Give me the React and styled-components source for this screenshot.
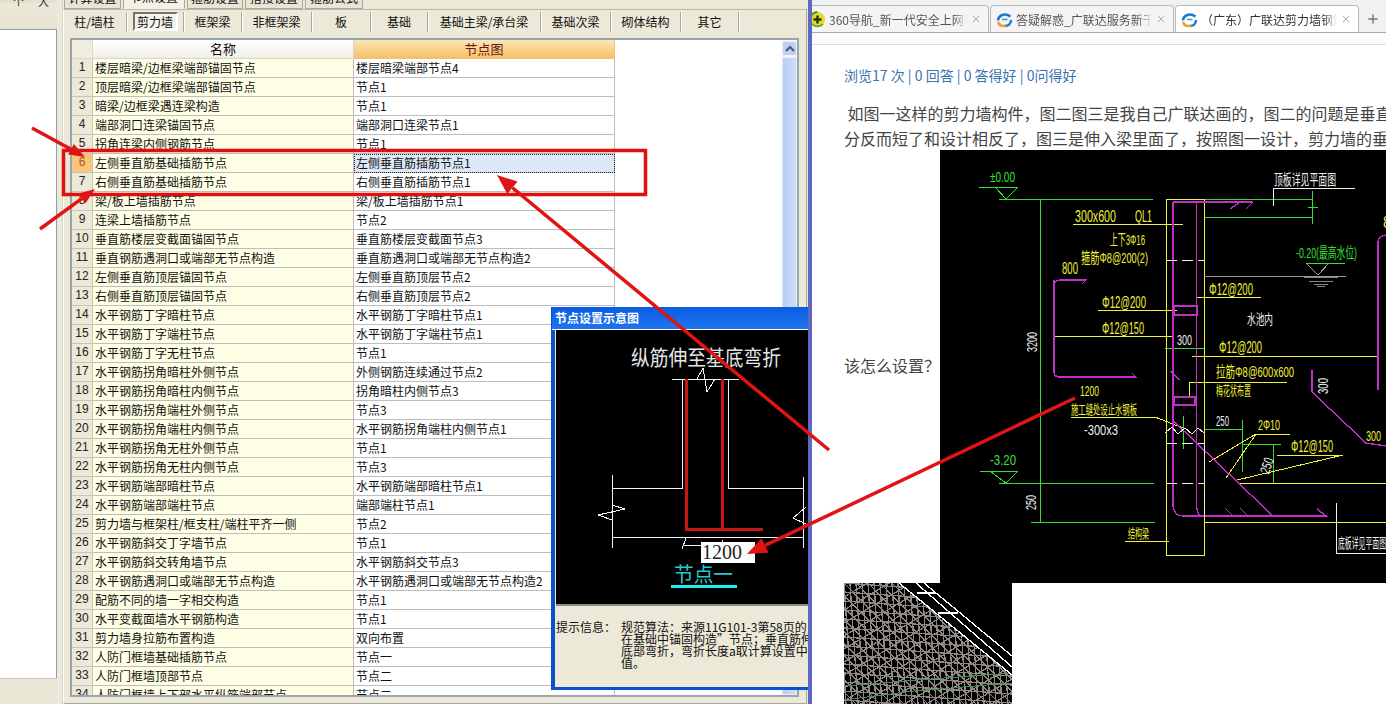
import styled, { createGlobalStyle } from "styled-components";
import { X, Plus } from "lucide-react";

const GlobalStyle = createGlobalStyle`
  html, body { margin: 0; padding: 0; background: #fff; }
  * { box-sizing: border-box; }
  body { font-family: "Noto Sans CJK SC", sans-serif; font-size: 12px; }
`;

const rows = [
  ["楼层暗梁/边框梁端部锚固节点", "楼层暗梁端部节点4"],
  ["顶层暗梁/边框梁端部锚固节点", "节点1"],
  ["暗梁/边框梁遇连梁构造", "节点1"],
  ["端部洞口连梁锚固节点", "端部洞口连梁节点1"],
  ["拐角连梁内侧钢筋节点", "节点1"],
  ["左侧垂直筋基础插筋节点", "左侧垂直筋插筋节点1"],
  ["右侧垂直筋基础插筋节点", "右侧垂直筋插筋节点1"],
  ["梁/板上墙插筋节点", "梁/板上墙插筋节点1"],
  ["连梁上墙插筋节点", "节点2"],
  ["垂直筋楼层变截面锚固节点", "垂直筋楼层变截面节点3"],
  ["垂直钢筋遇洞口或端部无节点构造", "垂直筋遇洞口或端部无节点构造2"],
  ["左侧垂直筋顶层锚固节点", "左侧垂直筋顶层节点2"],
  ["右侧垂直筋顶层锚固节点", "右侧垂直筋顶层节点2"],
  ["水平钢筋丁字暗柱节点", "水平钢筋丁字暗柱节点1"],
  ["水平钢筋丁字端柱节点", "水平钢筋丁字端柱节点1"],
  ["水平钢筋丁字无柱节点", "节点1"],
  ["水平钢筋拐角暗柱外侧节点", "外侧钢筋连续通过节点2"],
  ["水平钢筋拐角暗柱内侧节点", "拐角暗柱内侧节点3"],
  ["水平钢筋拐角端柱外侧节点", "节点3"],
  ["水平钢筋拐角端柱内侧节点", "水平钢筋拐角端柱内侧节点1"],
  ["水平钢筋拐角无柱外侧节点", "节点1"],
  ["水平钢筋拐角无柱内侧节点", "节点3"],
  ["水平钢筋端部暗柱节点", "水平钢筋端部暗柱节点1"],
  ["水平钢筋端部端柱节点", "端部端柱节点1"],
  ["剪力墙与框架柱/框支柱/端柱平齐一侧", "节点2"],
  ["水平钢筋斜交丁字墙节点", "节点1"],
  ["水平钢筋斜交转角墙节点", "水平钢筋斜交节点3"],
  ["水平钢筋遇洞口或端部无节点构造", "水平钢筋遇洞口或端部无节点构造2"],
  ["配筋不同的墙一字相交构造", "节点1"],
  ["水平变截面墙水平钢筋构造", "节点1"],
  ["剪力墙身拉筋布置构造", "双向布置"],
  ["人防门框墙基础插筋节点", "节点一"],
  ["人防门框墙顶部节点", "节点二"],
  ["人防门框墙上下部水平纵筋端部节点", "节点二"],
];

const topTabs = [
  ["计算设置", 57],
  ["节点设置", 62, true],
  ["箍筋设置", 56],
  ["搭接设置", 58],
  ["箍筋公式", 58],
];

const subTabs = [
  ["柱/墙柱", 58],
  ["剪力墙", 57, true],
  ["框架梁", 58],
  ["非框架梁", 70],
  ["板", 59],
  ["基础", 57],
  ["基础主梁/承台梁", 113],
  ["基础次梁", 70],
  ["砌体结构", 70],
  ["其它", 58],
];

const Page = styled.div`
  position: relative;
  display: flex;
  width: 1386px;
  height: 704px;
  overflow: hidden;
`;

const AppPane = styled.div`
  position: relative;
  display: flex;
  flex: 0 0 808px;
  height: 704px;
  overflow: hidden;
  background: #ece9d8;
  color: #111;
`;

const LeftDock = styled.div`
  display: flex;
  flex-direction: column;
  flex: 0 0 57px;
`;

const DockTop = styled.div`
  display: flex;
  justify-content: flex-end;
  gap: 14px;
  height: 30px;
  padding-right: 8px;
  background: linear-gradient(#e4e1d0 0 3px, #ece9d8 3px, #e6e3d2);
  border-bottom: 1px solid #8f9db0;
  font-size: 11px;
  line-height: 2px;
  color: #333;
`;

const DockList = styled.div`
  flex: 1;
  background: #fff;
  border-right: 1px solid #8f9db0;
`;

const DockFoot = styled.div`
  height: 26px;
  background: #e9e6d6;
  border-top: 1px solid #c9c6b6;
`;

const MainPanel = styled.div`
  display: flex;
  flex-direction: column;
  flex: 0 0 746px;
  margin-left: 5px;
  border-left: 1px solid #d8d5c6;
`;

const TopTabs = styled.div`
  display: flex;
  align-items: flex-end;
  gap: 2px;
  height: 9px;
  overflow: hidden;
  padding-left: 1px;
  flex-shrink: 0;
`;

const TopTab = styled.div`
  flex: 0 0 ${(p) => p.$w}px;
  height: ${(p) => (p.$active ? 20 : 19)}px;
  line-height: 14px;
  text-align: center;
  background: ${(p) => (p.$active ? "#f4f2e6" : "#e8e5d4")};
  border: 1px solid #aca899;
  border-bottom-color: ${(p) => (p.$active ? "#f4f2e6" : "#aca899")};
`;

const TabBody = styled.div`
  flex: 1;
  margin-right: 2px;
  padding: 2px 7px 5px 6px;
  border: 1px solid #aca899;
  border-top-color: #bdb9a8;
  border-left-color: #fff;
  min-height: 0;
`;

const SubBar = styled.div`
  display: flex;
  height: 20px;
  margin-left: -1px;
  margin-bottom: 6px;
`;

const SubTab = styled.div`
  display: flex;
  align-items: center;
  justify-content: center;
  flex: 0 0 ${(p) => p.$w}px;
  padding-bottom: 1px;
  border-right: 1px solid #aca899;
  box-shadow: 1px 0 0 #fff;
  font-size: 12px;

  &:first-child {
    padding-right: 6px;
  }
`;

const SubLabel = styled.span`
  display: flex;
  align-items: center;
  justify-content: center;
  width: ${(p) => (p.$active ? "45px" : "auto")};
  height: 19px;
  ${(p) =>
    p.$active &&
    `background: #f5f3e9;
     border: 2px solid;
     border-color: #76746a #fff #fff #76746a;`}
`;

const TableBox = styled.div`
  display: flex;
  height: 659px;
  width: 729px;
  background: #fff;
  border: 2px solid #98a5ad;
  overflow: hidden;
`;

const GridArea = styled.div`
  flex: 0 0 709px;
  overflow: hidden;
`;

const Row = styled.div`
  display: grid;
  grid-template-columns: 21px 261px 261px;
  height: 19px;
`;

const Cell = styled.div`
  padding: 0 2px;
  line-height: 17px;
  white-space: nowrap;
  overflow: hidden;
  border-right: 1px solid #bdbdbd;
  border-bottom: 1px solid #bdbdbd;
`;

const NumCell = styled(Cell)`
  padding: 0;
  text-align: center;
  font-family: "Liberation Sans", sans-serif;
  font-size: 12px;
  background: ${(p) => (p.$selected ? "#fbc67c" : "#ece9d8")};
  color: ${(p) => (p.$selected ? "#a8560c" : "#222")};
  border-color: #c9c6b8;
`;

const NameCell = styled(Cell)`
  background: #ffffe6;
`;

const NodeCell = styled(Cell)`
  background: ${(p) => (p.$selected ? "#dde8f6" : "#fff")};
  ${(p) => p.$selected && "outline: 1px dotted #222; outline-offset: -1px;"}
`;

const HeadNum = styled(Cell)`
  background: #efede0;
  border-color: #dedbcb;
`;

const HeadName = styled(Cell)`
  text-align: center;
  font-size: 13px;
  background: linear-gradient(#fff, #efeee6);
  border-color: #d8d6cb;
`;

const HeadNode = styled(Cell)`
  text-align: center;
  font-size: 13px;
  color: #6e1414;
  background: linear-gradient(#fbe6b8, #f6c066);
  border-color: #f0c070;
`;

const ScrollBar = styled.div`
  display: flex;
  flex-direction: column;
  flex: 0 0 16px;
  padding: 1px 0 0 1px;
  background: #f4f6fc;
`;

const ScrollUp = styled.div`
  display: flex;
  align-items: center;
  justify-content: center;
  flex: 0 0 15px;
  margin-bottom: 1px;
  background: #c2d0ec;
  border: 1px solid #eef3fe;
  border-radius: 2px;
`;

const ScrollThumb = styled.div`
  flex: 1;
  background: linear-gradient(to right, #b8cdf8, #cfdcf8);
  border: 1px solid #e6edfc;
`;

const FloatWindow = styled.div`
  position: absolute;
  left: 551px;
  top: 307px;
  width: 290px;
  height: 383px;
  display: flex;
  flex-direction: column;
  background: #ece9d8;
  border-left: 4px solid #0b50cf;
  border-bottom: 3px solid #0b50cf;
`;

const WinTitle = styled.div`
  flex: 0 0 22px;
  margin-left: -3px;
  padding-left: 3px;
  line-height: 22px;
  font-size: 12px;
  font-weight: 700;
  color: #fff;
  background: linear-gradient(#0a5ce2, #1f75ee);
  border-bottom: 1px solid #fff;
`;

const WinCanvas = styled.div`
  flex: 0 0 276px;
  margin-left: 1px;
  background: #000;
  border-bottom: 2px solid #8a8a84;
`;

const Hint = styled.div`
  display: flex;
  padding-top: 15px;
  margin-left: 1px;
  line-height: 12px;
  font-size: 12px;
  color: #111;
  white-space: nowrap;
`;

const HintLabel = styled.div`
  flex: 0 0 65px;
`;

const Divider = styled.div`
  flex: 0 0 4px;
  background: #6168c4;
`;

const Browser = styled.div`
  flex: 0 0 574px;
  height: 704px;
  overflow: hidden;
  background: #fff;
`;

const TabStrip = styled.div`
  display: flex;
  align-items: flex-end;
  gap: 1px;
  height: 33px;
  background: #f1f1f1;
  border-bottom: 1px solid #ababab;
  overflow: hidden;
`;

const BrowserTab = styled.div`
  display: flex;
  align-items: center;
  flex: 0 0 ${(p) => p.$w}px;
  min-width: 0;
  margin-left: ${(p) => p.$ml || 0}px;
  margin-bottom: -1px;
  height: 28px;
  padding: 0 6px 0 5px;
  gap: 3px;
  background: ${(p) => (p.$active ? "#fff" : "#f4f4f4")};
  border: 1px solid #b9b9b9;
  border-bottom-color: ${(p) => (p.$active ? "#fff" : "#ababab")};
  border-radius: 4px 4px 0 0;
  color: ${(p) => (p.$active ? "#333" : "#555")};
  font-size: 12px;
`;

const TabTitle = styled.span`
  flex: 1;
  min-width: 0;
  overflow: hidden;
  white-space: nowrap;
  -webkit-mask-image: linear-gradient(to right, #000 90%, transparent);
  mask-image: linear-gradient(to right, #000 90%, transparent);
`;

const NewTab = styled.div`
  display: flex;
  align-items: center;
  justify-content: center;
  flex: 0 0 26px;
  height: 27px;
  color: #777;
`;

const Toolbar = styled.div`
  height: 12px;
  background: #fbfbfb;
  border-bottom: 1px solid #dedede;
`;

const Article = styled.div`
  padding: 20px 0 0 32px;
`;

const Stats = styled.div`
  height: 20px;
  line-height: 20px;
  font-size: 14px;
  color: #3b72ad;
  white-space: nowrap;
`;

const Para = styled.p`
  margin: 16px 0 -1px;
  font-size: 16px;
  line-height: 25px;
  color: #444;
  white-space: nowrap;
`;

const FigureRow = styled.div`
  display: flex;
  align-items: center;
  height: 433px;
`;

const Ask = styled.span`
  flex: 0 0 96px;
  margin-bottom: 4px;
  font-size: 16px;
  color: #444;
`;

const CadPic = styled.svg`
  display: block;
  flex: 0 0 auto;
  background: #000;
  shape-rendering: crispEdges;
  font-family: "Liberation Sans", "Noto Sans CJK SC", sans-serif;
`;

const Overlay = styled.svg`
  position: absolute;
  left: 0;
  top: 0;
  pointer-events: none;
`;

const T = ({ x, y, w, c, s = 13, r, children }) => (
  <text
    x={x}
    y={y}
    fill={c}
    fontSize={s}
    textLength={w}
    lengthAdjust="spacingAndGlyphs"
    dominantBaseline="central"
    transform={r ? `rotate(${r} ${x} ${y})` : undefined}
  >
    {children}
  </text>
);

const GREEN = "#35e035";
const YELLOW = "#f2f23c";
const MAGENTA = "#c030c8";
const WHITE = "#f0f0f0";

const greenPaths =
  "M39 37H78M55 37L66 49L78 37M59 49H213M100 49V372M264 49H372M264 67H372M372.5 41V74M368 57H378M225 198H265" +
  "M40 321H78M50 321L66 333L78 321M59 333H214M91 372H215M264 279H303M302 270V322M302 294H341M333.5 294V333M243 266V299";
const yellowPaths =
  "M226 49H264V405H226ZM133 74H243M158 160H237M114 186H233M256 147H321M252 206H438M249 247V232H347M131 267H215L243 278" +
  "M316 284H350M316 284L269 312M316 284L286 328M337 305H403L297 330M264 372H446M300 333H446M185 391H229";
const magentaPaths =
  "M233 52H313M290 59L300 52M306 59L313 52M233 52V355Q234 366 243 366H386L377 359M256.5 52V355Q257 366 262 366" +
  "M114 137Q114 130 120 130H146L142 134M114 130V222Q114 227 120 227H196L192 223M234 156H257V165H234ZM234 247H255V255H234Z" +
  "M230.5 221L239.5 230M232.5 270L333 366M293 366L285 358M308 366L300 358M372 220V242L426 293L446 296M438 240V92Q438 86 446 85";
const whitePaths =
  "M333 56V38H415M396 353V403H446M225 283L232 277L238 284L245 278L252 284L258 278L264 283";

const CadDrawing = () => (
  <CadPic width="446" height="433" viewBox="0 0 446 433">
    <path d={greenPaths} fill="none" stroke={GREEN} strokeWidth="1" />
    <path d={yellowPaths} fill="none" stroke={YELLOW} strokeWidth="1" />
    <path d={magentaPaths} fill="none" stroke={MAGENTA} strokeWidth="1.4" />
    <path d={whitePaths} fill="none" stroke={WHITE} strokeWidth="1" />
    <path d="M226 110H264M226 293H264M226 333H264M264 293V367" fill="none" stroke={WHITE} strokeDasharray="11 5" />
    <path d="M264 126H406M366 113L378 125L389 113" fill="none" stroke="#999" />
    <path d="M366 113H405" stroke={GREEN} />
    <path d="M364 127H398M369 131H393M374 134H388M377 136H385" stroke="#8a8a8a" />
    <T x={50} y={27} w={25} c={GREEN} s={14}>±0.00</T>
    <T x={334} y={29} w={62} c={WHITE} s={15}>顶板详见平面图</T>
    <T x={135} y={66} w={41} c={YELLOW} s={16}>300x600</T>
    <T x={195} y={66} w={17} c={YELLOW} s={16}>QL1</T>
    <T x={170} y={89} w={35} c={YELLOW} s={15}>上下3Φ16</T>
    <T x={141} y={107} w={67} c={YELLOW} s={15}>箍筋Φ8@200(2)</T>
    <T x={122} y={118} w={16} c={YELLOW} s={16}>800</T>
    <T x={162} y={152} w={44} c={YELLOW} s={16}>Φ12@200</T>
    <T x={162} y={178} w={42} c={YELLOW} s={16}>Φ12@150</T>
    <T x={269} y={139} w={44} c={YELLOW} s={16}>Φ12@200</T>
    <T x={279} y={197} w={43} c={YELLOW} s={16}>Φ12@200</T>
    <T x={237} y={189} w={15} c={WHITE} s={15}>300</T>
    <T x={307} y={169} w={26} c={WHITE} s={14}>水池内</T>
    <T x={356} y={102} w={61} c={GREEN} s={15}>-0.20(最高水位)</T>
    <T x={443} y={72} w={8} c={YELLOW} s={16}>8</T>
    <T x={92} y={202} w={20} c={WHITE} s={14} r={-90}>3200</T>
    <T x={276} y={221} w={78} c={YELLOW} s={15}>拉筋Φ8@600x600</T>
    <T x={276} y={240} w={35} c={YELLOW} s={13}>梅花状布置</T>
    <T x={140} y={240} w={19} c={YELLOW} s={15}>1200</T>
    <T x={131} y={259} w={66} c={YELLOW} s={13}>施工缝处设止水钢板</T>
    <T x={144} y={279} w={34} c={WHITE} s={15}>-300x3</T>
    <T x={50} y={310} w={26} c={GREEN} s={14}>-3.20</T>
    <T x={91} y={360} w={15} c={WHITE} s={14} r={-90}>250</T>
    <T x={188} y={383} w={21} c={YELLOW} s={13}>结构梁</T>
    <T x={398} y={393} w={48} c={WHITE} s={14}>底板详见平面图</T>
    <T x={383} y={244} w={16} c={WHITE} s={14} r={-90}>300</T>
    <T x={426} y={285} w={15} c={YELLOW} s={15}>300</T>
    <T x={276} y={270} w={13} c={WHITE} s={15}>250</T>
    <T x={318} y={274} w={22} c={YELLOW} s={15}>2Φ10</T>
    <T x={351} y={296} w={42} c={YELLOW} s={16}>Φ12@150</T>
    <T x={324} y={323} w={16} c={WHITE} s={14} r={-70}>250</T>
  </CadPic>
);

// wire mesh of the lower picture: a few families of parallel lines
const meshLines = [];
for (let i = -30; i < 50; i++) {
  meshLines.push(`M${i * 6} 0L${i * 6 + 8} 121`);
  meshLines.push(`M0 ${i * 9}L168 ${i * 9 + 12}`);
  meshLines.push(`M${i * 12} 0L${i * 12 + 120} 121`);
  meshLines.push(`M0 ${i * 13 + 40}L168 ${i * 13 - 60}`);
}

const MeshDrawing = () => (
  <CadPic width="168" height="121" viewBox="0 0 168 121">
    <defs>
      <clipPath id="meshClip">
        <polygon points="0,0 55,0 168,92 168,121 0,121" />
      </clipPath>
    </defs>
    <g clipPath="url(#meshClip)">
      <path d={meshLines.join("")} fill="none" stroke="#8f8985" strokeWidth="1.3" />
      <path d="M0 103L60 98L168 90M0 117L70 108L168 100" fill="none" stroke="#4d8a4d" />
    </g>
    <path
      d="M80 0L168 73M72 0L168 84M55 0L168 92M73 10H92M94 30H114"
      fill="none"
      stroke="#fff"
      strokeWidth="1.3"
    />
  </CadPic>
);

const NodeDiagram = () => (
  <CadPic width="262" height="274" viewBox="0 0 262 274">
    <T x={75} y={27} w={150} c="#e6e6e6" s={21}>纵筋伸至基底弯折</T>
    <path
      d="M116 49H183M141 49L147 38L151 62L159 49M126 49V158H56M172 49V158H247M56 145V218M247 147V218M56 207H247M56 175L69 179L42 185L56 190M250 177L237 188L250 194M127 215H167M130 208L126 219M166 210V218"
      fill="none"
      stroke="#f2f2f2"
      strokeWidth="1"
    />
    <path d="M130 49V199H207M166 49V199" fill="none" stroke="#c81616" strokeWidth="3" />
    <rect x="145" y="212" width="54" height="21" fill="#fff" />
    <text x="146" y="229" fill="#222" fontSize="20" fontFamily="Liberation Serif, serif">1200</text>
    <T x={118} y={245} w={59} c="#25c8d0" s={20}>节点一</T>
    <rect x="115" y="255" width="66" height="3" fill="#1df0f0" />
  </CadPic>
);

const Arrow = ({ from, to, len = 18, half = 7, w = 3.5 }) => {
  const dx = to[0] - from[0];
  const dy = to[1] - from[1];
  const d = Math.hypot(dx, dy);
  const ux = dx / d;
  const uy = dy / d;
  const bx = to[0] - ux * len;
  const by = to[1] - uy * len;
  const points = `${to[0]},${to[1]} ${bx - uy * half},${by + ux * half} ${bx + uy * half},${by - ux * half}`;
  return (
    <g fill="#e01414" stroke="#e01414">
      <line x1={from[0]} y1={from[1]} x2={bx} y2={by} strokeWidth={w} />
      <polygon points={points} strokeWidth="0" />
    </g>
  );
};

const SiteIcon = () => (
  <svg width="17" height="17" viewBox="0 0 17 17" style={{ flex: "none" }}>
    <path d="M2 9.5C2.5 4 9 1.5 14.5 5.5" fill="none" stroke="#1f78cc" strokeWidth="2.6" />
    <path d="M15 9C15 13 12 15 9 15" fill="none" stroke="#1f78cc" strokeWidth="2.4" />
    <path d="M2 11C3.5 15 7 15.5 10 14.5" fill="none" stroke="#f0a030" strokeWidth="2.6" />
    <path d="M6 8.5H11.5" stroke="#35a0e0" strokeWidth="1.6" />
  </svg>
);

const NavIcon = () => (
  <svg width="17" height="17" viewBox="0 0 17 17" style={{ flex: "none" }}>
    <circle cx="8.5" cy="8.5" r="7.5" fill="#e4dc20" />
    <path d="M1 8.5A7.5 7.5 0 0 1 8.5 1A7.5 7.5 0 0 0 1 8.5Z" fill="#3c9a30" stroke="#3c9a30" strokeWidth="2" />
    <path d="M3 13A7.5 7.5 0 0 0 14 13" fill="none" stroke="#4aa830" strokeWidth="1.6" />
    <path d="M8.5 4.5V12.5M4.5 8.5H12.5" stroke="#24340e" strokeWidth="2.4" />
  </svg>
);

export default function App() {
  return (
    <Page>
      <GlobalStyle />
      <AppPane>
        <LeftDock>
          <DockTop>
            <span>个</span>
            <span>大</span>
          </DockTop>
          <DockList />
          <DockFoot />
        </LeftDock>
        <MainPanel>
          <TopTabs>
            {topTabs.map(([label, w, active]) => (
              <TopTab key={label} $w={w} $active={active}>
                {label}
              </TopTab>
            ))}
          </TopTabs>
          <TabBody>
            <SubBar>
              {subTabs.map(([label, w, active]) => (
                <SubTab key={label} $w={w}>
                  <SubLabel $active={active}>{label}</SubLabel>
                </SubTab>
              ))}
            </SubBar>
            <TableBox>
              <GridArea>
                <Row>
                  <HeadNum />
                  <HeadName>名称</HeadName>
                  <HeadNode>节点图</HeadNode>
                </Row>
                {rows.map(([name, node], i) => (
                  <Row key={i}>
                    <NumCell $selected={i === 5}>{i + 1}</NumCell>
                    <NameCell>{name}</NameCell>
                    <NodeCell $selected={i === 5}>{node}</NodeCell>
                  </Row>
                ))}
              </GridArea>
              <ScrollBar>
                <ScrollUp>
                  <svg width="10" height="7" viewBox="0 0 10 7">
                    <path d="M1 6L5 2L9 6" fill="none" stroke="#3f5a8c" strokeWidth="2" />
                  </svg>
                </ScrollUp>
                <ScrollThumb />
              </ScrollBar>
            </TableBox>
          </TabBody>
        </MainPanel>
        <FloatWindow>
          <WinTitle>节点设置示意图</WinTitle>
          <WinCanvas>
            <NodeDiagram />
          </WinCanvas>
          <Hint>
            <HintLabel>提示信息：</HintLabel>
            <div>
              规范算法：来源11G101-3第58页的“墙身竖向分布钢筋
              <br />
              在基础中锚固构造”节点；垂直筋伸至基础
              <br />
              底部弯折，弯折长度a取计算设置中的设定
              <br />
              值。
            </div>
          </Hint>
        </FloatWindow>
      </AppPane>
      <Divider />
      <Browser>
        <TabStrip>
          <BrowserTab $w={186} $ml={-9}>
            <NavIcon />
            <TabTitle>360导航_新一代安全上网导航</TabTitle>
            <X size={12} color="#aaa" />
          </BrowserTab>
          <BrowserTab $w={184}>
            <SiteIcon />
            <TabTitle>答疑解惑_广联达服务新干线</TabTitle>
            <X size={12} color="#aaa" />
          </BrowserTab>
          <BrowserTab $w={184} $active>
            <SiteIcon />
            <TabTitle>（广东）广联达剪力墙钢筋设置</TabTitle>
            <X size={12} color="#aaa" />
          </BrowserTab>
          <NewTab>
            <Plus size={14} strokeWidth={2.5} />
          </NewTab>
        </TabStrip>
        <Toolbar />
        <Article>
          <Stats>浏览17 次 | 0 回答 | 0 答得好 | 0问得好</Stats>
          <Para>
            &nbsp;如图一这样的剪力墙构件，图二图三是我自己广联达画的，图二的问题是垂直筋伸入基础的部
            <br />
            分反而短了和设计相反了，图三是伸入梁里面了，按照图一设计，剪力墙的垂直筋应该
          </Para>
          <FigureRow>
            <Ask>该怎么设置？</Ask>
            <CadDrawing />
          </FigureRow>
          <MeshDrawing />
        </Article>
      </Browser>
      <Overlay width="1386" height="704" viewBox="0 0 1386 704">
        <rect x="63.5" y="150.5" width="582" height="44" fill="none" stroke="#e01010" strokeWidth="3.5" />
        <Arrow from={[32, 128]} to={[85, 157]} len={16} half={6} />
        <Arrow from={[40, 229]} to={[95, 189]} len={16} half={6} />
        <Arrow from={[829, 450]} to={[497, 175]} len={20} half={8} />
        <Arrow from={[1075, 398]} to={[747, 554]} len={20} half={8} />
      </Overlay>
    </Page>
  );
}
